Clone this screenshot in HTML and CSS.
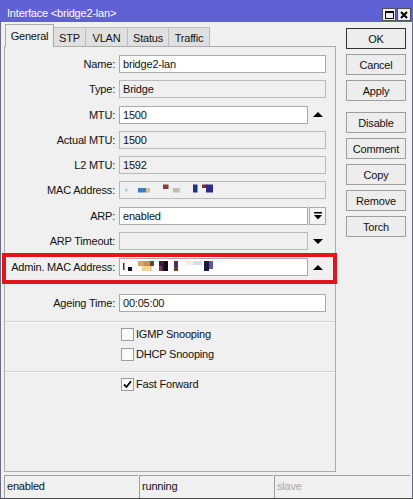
FILE: index.html
```html
<!DOCTYPE html>
<html>
<head>
<meta charset="utf-8">
<link rel="stylesheet" href="styles.css">
</head>
<body>
<div class="window">
  <div class="titlebar">
    <span class="title">Interface &lt;bridge2-lan&gt;</span>
    <div class="tb-btns">
      <span class="tb-btn"><svg width="9" height="8" viewBox="0 0 9 8"><rect x="0.5" y="0.5" width="8" height="7" fill="none" stroke="#000"/><rect x="0" y="0" width="9" height="2" fill="#000"/></svg></span>
      <span class="tb-btn"><svg width="8" height="8" viewBox="0 0 8 8"><path d="M1 1L7 7M7 1L1 7" stroke="#000" stroke-width="2"/></svg></span>
    </div>
  </div>
  <div class="main">
    <div class="left">
      <div class="tabs">
        <div class="tab active w-general">General</div>
        <div class="tab w-stp">STP</div>
        <div class="tab w-vlan">VLAN</div>
        <div class="tab w-status">Status</div>
        <div class="tab w-traffic">Traffic</div>
      </div>
      <div class="panel">
        <div class="row r1"><span class="label">Name:</span><div class="field wide">bridge2-lan</div></div>
        <div class="row"><span class="label">Type:</span><div class="field wide ro">Bridge</div></div>
        <div class="row"><span class="label">MTU:</span><div class="field">1500</div><span class="arrow"><svg width="10" height="5" viewBox="0 0 10 5"><path d="M0 5L5 0L10 5Z" fill="#000"/></svg></span></div>
        <div class="row"><span class="label">Actual MTU:</span><div class="field wide ro">1500</div></div>
        <div class="row"><span class="label">L2 MTU:</span><div class="field wide ro">1592</div></div>
        <div class="row"><span class="label">MAC Address:</span><div class="field wide ro pix"><svg width="100" height="16" viewBox="0 0 100 16">
          <rect x="5" y="6.5" width="2.5" height="3" fill="#a9c9ea"/>
          <rect x="18" y="6" width="8" height="4.5" fill="#3f7cc8"/>
          <rect x="26" y="6" width="4" height="4.5" fill="#d6bf9c"/>
          <rect x="43" y="2.5" width="5.5" height="4.5" fill="#8a3a3a"/>
          <rect x="53" y="6" width="4" height="4.5" fill="#cbb99a"/>
          <rect x="57" y="6" width="3" height="4.5" fill="#b4c6d6"/>
          <rect x="73" y="2.5" width="4.5" height="8" fill="#213181"/>
          <rect x="82" y="2.5" width="5" height="3.5" fill="#7b3038"/>
          <rect x="86" y="2.5" width="7" height="8" fill="#2f2a82"/>
        </svg></div></div>
        <div class="row"><span class="label">ARP:</span><div class="field">enabled</div><span class="ddbtn"><svg width="8" height="8" viewBox="0 0 8 8"><rect x="0" y="0" width="8" height="1.5" fill="#000"/><path d="M0 3H8L4 7.5Z" fill="#000"/></svg></span></div>
        <div class="row"><span class="label">ARP Timeout:</span><div class="field ro"></div><span class="arrow"><svg width="10" height="5" viewBox="0 0 10 5"><path d="M0 0H10L5 5Z" fill="#000"/></svg></span></div>
        <div class="admin">
          <div class="row"><span class="label">Admin. MAC Address:</span><div class="field pix"><svg width="100" height="16" viewBox="0 0 100 16">
            <rect x="3" y="4" width="1.5" height="7" fill="#333"/>
            <rect x="8" y="8" width="4" height="4" fill="#111"/>
            <rect x="18" y="2" width="6" height="5" fill="#d8a46c"/>
            <rect x="24" y="2" width="8" height="5" fill="#c89058"/>
            <rect x="22" y="7" width="10" height="5" fill="#f2d48e"/>
            <rect x="30" y="2" width="4" height="5" fill="#6a4828"/>
            <rect x="39" y="2" width="5" height="10" fill="#3a1a3a"/>
            <rect x="44" y="2" width="4" height="10" fill="#150a15"/>
            <rect x="39" y="7" width="3" height="5" fill="#7a3a60"/>
            <rect x="54" y="2" width="4" height="6" fill="#4a2a70"/>
            <rect x="54" y="8" width="4" height="4" fill="#6a4030"/>
            <rect x="65" y="2" width="8" height="4" fill="#f3eedd"/>
            <rect x="73" y="2" width="9" height="4" fill="#d0dff0"/>
            <rect x="84" y="2" width="5" height="10" fill="#1a1a40"/>
            <rect x="89" y="2" width="4" height="8" fill="#5a5aa0"/>
          </svg></div><span class="arrow"><svg width="10" height="5" viewBox="0 0 10 5"><path d="M0 5L5 0L10 5Z" fill="#000"/></svg></span></div>
        </div>
        <div class="row ageing"><span class="label">Ageing Time:</span><div class="field wide">00:05:00</div></div>
        <div class="sep first"></div>
        <div class="check"><span class="cb"></span><span>IGMP Snooping</span></div>
        <div class="check next"><span class="cb"></span><span>DHCP Snooping</span></div>
        <div class="sep second"></div>
        <div class="check"><span class="cb"><svg width="9" height="9" viewBox="0 0 9 9"><path d="M1 4.5L3.5 7L8 1.2" fill="none" stroke="#000" stroke-width="1.8"/></svg></span><span>Fast Forward</span></div>
      </div>
    </div>
    <div class="buttons">
      <div class="btn default">OK</div>
      <div class="btn">Cancel</div>
      <div class="btn">Apply</div>
      <div class="btn spaced">Disable</div>
      <div class="btn">Comment</div>
      <div class="btn">Copy</div>
      <div class="btn">Remove</div>
      <div class="btn">Torch</div>
    </div>
  </div>
  <div class="statusbar">
    <div class="cell">enabled</div>
    <div class="cell">running</div>
    <div class="cell dim">slave</div>
  </div>
</div>
</body>
</html>
```
FILE: styles.css
```css
* { box-sizing: border-box; }
body {
  margin: 0;
  font-family: "Liberation Sans", Arial, sans-serif;
  font-size: 11px;
  letter-spacing: -0.2px;
  color: #111;
  background: #f0f0f0;
}
.window {
  width: 413px;
  height: 499px;
  display: flex;
  flex-direction: column;
  background: #f0f0f0;
  border-left: 1px solid #6a6a7a;
  border-right: 1px solid #6a6a7a;
  border-bottom: 1px solid #4a4a4a;
}
.titlebar {
  height: 22px;
  margin: 0 -1px;
  background: #6161d6;
  display: flex;
  align-items: flex-end;
  justify-content: space-between;
  padding: 0 2px 1px 7px;
  flex: none;
}
.title {
  color: #fff;
  line-height: 14px;
  padding-bottom: 1px;
}
.tb-btns { display: flex; gap: 1px; }
.tb-btn {
  width: 14px;
  height: 13px;
  background: #efefef;
  border: 1px solid #505050;
  display: flex;
  align-items: center;
  justify-content: center;
}
.main {
  display: flex;
  padding-left: 3px;
  height: 450px;
  flex: none;
}
.left { width: 332px; display: flex; flex-direction: column; }
.tabs {
  display: flex;
  align-items: flex-end;
  height: 22px;
  margin-top: 2px;
  padding-left: 1px;
}
.tab {
  height: 19px;
  border: 1px solid #bcbcbc;
  border-bottom: none;
  background: #e0e0e0;
  display: flex;
  align-items: center;
  justify-content: center;
  margin-right: -1px;
  padding-top: 1px;
}
.tab.active {
  height: 23px;
  margin-bottom: -1px;
  background: #f0f0f0;
  border-color: #a8a8a8;
  position: relative;
  z-index: 1;
  padding-top: 0;
}
.w-general { width: 49px; }
.w-stp { width: 33px; }
.w-vlan { width: 43px; }
.w-status { width: 42px; }
.w-traffic { width: 42px; }
.panel {
  height: 426px;
  border: 1px solid #acacac;
  background: #f0f0f0;
  padding-top: 8px;
}
.row {
  display: grid;
  grid-template-columns: 114px 189px 20px;
  height: 18px;
  align-items: center;
}
.row + .row { margin-top: 7.3px; }
.label {
  text-align: right;
  padding-right: 4px;
  line-height: 18px;
  white-space: nowrap;
}
.field {
  height: 18px;
  border: 1px solid #a9a9a9;
  background: #fff;
  padding: 0 3px;
  line-height: 16px;
  white-space: nowrap;
  overflow: hidden;
}
.field.wide { grid-column: 2 / 4; width: 207px; }
.field.ro { background: #f0f0f0; border-color: #b9b9b9; }
.field.pix { padding: 0; }
.field.pix svg { display: block; }
.arrow {
  display: flex;
  justify-content: center;
  align-items: center;
  height: 18px;
}
.ddbtn {
  width: 17px;
  height: 18px;
  margin-left: 1px;
  border: 1px solid #a9a9a9;
  background: #f3f3f3;
  display: flex;
  align-items: center;
  justify-content: center;
}
.admin {
  margin: 3px -2px 0 -3px;
  border: 4px solid #e3141d;
  padding: 1px 0 4px;
}
.admin .row { grid-template-columns: 113px 189px 20px; }
.row.ageing { margin-top: 10px; }
.sep {
  border-top: 1px solid #d2d2d2;
  border-bottom: 1px solid #fbfbfb;
  margin: 9px 0 5px;
}
.sep.second { margin-top: 10px; }
.check {
  display: flex;
  align-items: center;
  gap: 2px;
  padding-left: 116px;
  height: 13px;
  line-height: 13px;
}
.check.next { margin-top: 7px; }
.cb {
  width: 13px;
  height: 13px;
  border: 1px solid #9c9c9c;
  background: #fbfbfb;
  display: flex;
  align-items: center;
  justify-content: center;
}
.buttons {
  margin-left: 10px;
  padding-top: 6px;
  width: 60px;
  display: flex;
  flex-direction: column;
  gap: 5px;
}
.btn {
  height: 21px;
  border: 1px solid #9e9e9e;
  background: #ededed;
  display: flex;
  align-items: center;
  justify-content: center;
}
.btn.default { border-color: #333; }
.btn.spaced { margin-top: 6px; }
.statusbar {
  display: grid;
  grid-template-columns: 134px 134px 136px;
  column-gap: 1px;
  margin: 3px 0 0 3px;
  height: 23px;
  flex: none;
}
.cell {
  border-top: 1px solid #a0a0a0;
  border-left: 1px solid #a0a0a0;
  padding-left: 2px;
  line-height: 21px;
}
.cell.dim { color: #a8a8a8; }
```
